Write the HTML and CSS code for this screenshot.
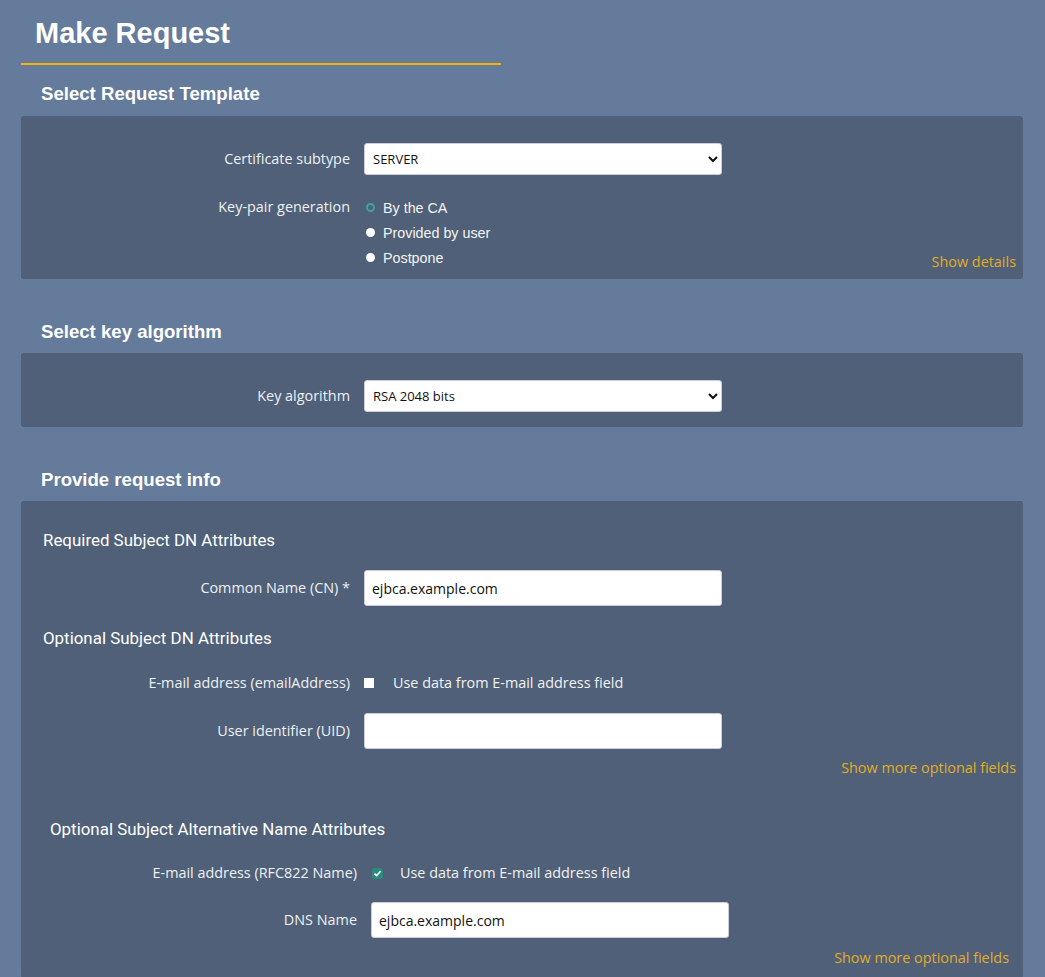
FILE: index.html
```html
<!DOCTYPE html>
<html lang="en">
<head>
    <meta charset="UTF-8">
    <title>Make Request</title>
    <link rel="stylesheet" href="styles.css">
</head>
<body>
    <main class="page">
        <h1 class="page-title">Make Request</h1>

        <!-- Request template -->
        <h3 class="section-title section-first">Select Request Template</h3>
        <section class="panel panel-template">
            <div class="form-row">
                <label class="field-label" for="subtype">Certificate subtype</label>
                <select id="subtype" class="field-select">
                    <option>SERVER</option>
                </select>
            </div>
            <div class="form-row row-top">
                <span class="field-label label-radio">Key-pair generation</span>
                <div class="radio-list">
                    <label class="radio-item"><span class="radio checked"></span>By the CA</label>
                    <label class="radio-item"><span class="radio"></span>Provided by user</label>
                    <label class="radio-item"><span class="radio"></span>Postpone</label>
                </div>
                <a href="#" class="more-link link-end">Show details</a>
            </div>
        </section>

        <!-- Key algorithm -->
        <h3 class="section-title">Select key algorithm</h3>
        <section class="panel panel-key">
            <div class="form-row">
                <label class="field-label" for="keyalg">Key algorithm</label>
                <select id="keyalg" class="field-select">
                    <option>RSA 2048 bits</option>
                </select>
            </div>
        </section>

        <!-- Request info -->
        <h3 class="section-title">Provide request info</h3>
        <section class="panel panel-info">
            <h4 class="sub-title sub-first">Required Subject DN Attributes</h4>
            <div class="form-row row-input">
                <label class="field-label" for="cn">Common Name (CN) *</label>
                <input id="cn" class="field-input" type="text" value="ejbca.example.com">
            </div>

            <h4 class="sub-title">Optional Subject DN Attributes</h4>
            <div class="form-row row-check">
                <span class="field-label">E-mail address (emailAddress)</span>
                <label class="check-item"><span class="check"></span>Use data from E-mail address field</label>
            </div>
            <div class="form-row row-input">
                <label class="field-label" for="uid">User identifier (UID)</label>
                <input id="uid" class="field-input" type="text" value="">
            </div>
            <div class="more-row"><a href="#" class="more-link">Show more optional fields</a></div>

            <div class="alt-names">
                <h4 class="sub-title sub-alt">Optional Subject Alternative Name Attributes</h4>
                <div class="form-row row-check">
                    <span class="field-label">E-mail address (RFC822 Name)</span>
                    <label class="check-item">
                        <span class="check checked">
                            <svg width="9" height="9" viewBox="0 0 9 9"><path d="M1.5 4.6 L3.6 6.6 L7.6 2.2" fill="none" stroke="#fff" stroke-width="1.6"/></svg>
                        </span>Use data from E-mail address field
                    </label>
                </div>
                <div class="form-row row-input">
                    <label class="field-label" for="dns">DNS Name</label>
                    <input id="dns" class="field-input" type="text" value="ejbca.example.com">
                </div>
                <div class="more-row"><a href="#" class="more-link">Show more optional fields</a></div>
            </div>
        </section>
    </main>
</body>
</html>
```

FILE: styles.css
```css
/* General */
body {
    margin: 0;
    padding: 0;
    background: #657b9b;
    font-family: "Open Sans", Arial, sans-serif;
    color: #f2f2f2;
}
.page {
    padding: 0 22px 0 21px;
}

/* Page title */
.page-title {
    width: 466px;
    margin: 14px 0 0;
    padding: 0 0 11px 14px;
    font-family: "Liberation Sans", Arial, sans-serif;
    font-size: 29px;
    line-height: 38px;
    font-weight: bold;
    color: #fff;
    border-bottom: 2px solid #f5b400;
}

/* Section headings */
.section-title {
    margin: 42px 0 10px 20px;
    font-family: "Liberation Sans", Arial, sans-serif;
    font-size: 18.6px;
    line-height: 22px;
    font-weight: bold;
    color: #fff;
}
.section-first {
    margin-top: 18px;
    margin-bottom: 11px;
}

/* Panels */
.panel {
    background: #4f6078;
    border-radius: 3px;
}
.panel-template {
    padding: 27px 7px 9px 0;
}
.panel-key {
    padding: 27px 7px 15px 0;
}
.panel-info {
    padding: 29px 7px 10px 0;
}

/* Form rows */
.form-row {
    display: grid;
    grid-template-columns: 329px 358px 1fr;
    column-gap: 14px;
    align-items: center;
}
.row-top {
    align-items: start;
    margin-top: 20px;
}
.row-input {
    margin-top: 20px;
}
.row-check {
    margin-top: 25px;
}
.field-label {
    text-align: right;
    font-size: 14.4px;
    line-height: 20px;
    color: #eef0f3;
}
.label-radio {
    line-height: 23px;
}

.field-select {
    height: 32px;
    width: 358px;
    padding: 0 4px;
    border: 1px solid #ccd;
    border-radius: 3px;
    background: #fff;
    font-family: "Open Sans", Arial, sans-serif;
    font-size: 13px;
    font-weight: normal;
    color: #111;
}
.field-input {
    box-sizing: border-box;
    height: 36px;
    width: 358px;
    padding: 0 7px;
    border: 1px solid #ccd;
    border-radius: 3px;
    font-family: "Open Sans", Arial, sans-serif;
    font-size: 14px;
    color: #111;
}

/* Radios */
.radio-list {
    display: flex;
    flex-direction: column;
}
.radio-item {
    display: flex;
    align-items: center;
    height: 25px;
    font-family: "Liberation Sans", Arial, sans-serif;
    font-size: 14.3px;
    color: #f4f4f4;
}
.radio {
    box-sizing: border-box;
    width: 9px;
    height: 9px;
    margin: 0 8px 0 2px;
    border-radius: 50%;
    background: #fff;
}
.radio.checked {
    background: #4f6078;
    border: 2px solid #3fa59a;
}

/* Checkboxes */
.check-item {
    display: flex;
    align-items: center;
    font-size: 14.4px;
    line-height: 20px;
    color: #f2f2f2;
}
.check {
    display: inline-flex;
    align-items: center;
    justify-content: center;
    width: 10px;
    height: 10px;
    margin: 0 19px 0 0;
    background: #fff;
}
.check.checked {
    width: 11px;
    height: 11px;
    margin: 0 17px 0 1px;
    border-radius: 2px;
    background: #2a8a7c;
}

/* Sub headings */
.sub-title {
    margin: 22px 0 0 22px;
    font-family: Roboto, "Liberation Sans", sans-serif;
    font-size: 16.9px;
    line-height: 20px;
    font-weight: normal;
    color: #fff;
}
.sub-first {
    margin-top: 0;
}
.alt-names {
    margin: 0 7px;
}
.sub-alt {
    margin-top: 41px;
    margin-left: 22px;
}
.alt-names .row-check {
    margin-top: 24px;
}
.alt-names .row-input {
    margin-top: 19px;
}

/* Links */
.more-row {
    margin-top: 7px;
    text-align: right;
}
.alt-names .more-row {
    margin-top: 8px;
}
.more-link {
    font-size: 14.4px;
    line-height: 20px;
    color: #e3ad25;
    text-decoration: none;
}
.link-end {
    justify-self: end;
    align-self: end;
    margin-bottom: -2px;
}
```
